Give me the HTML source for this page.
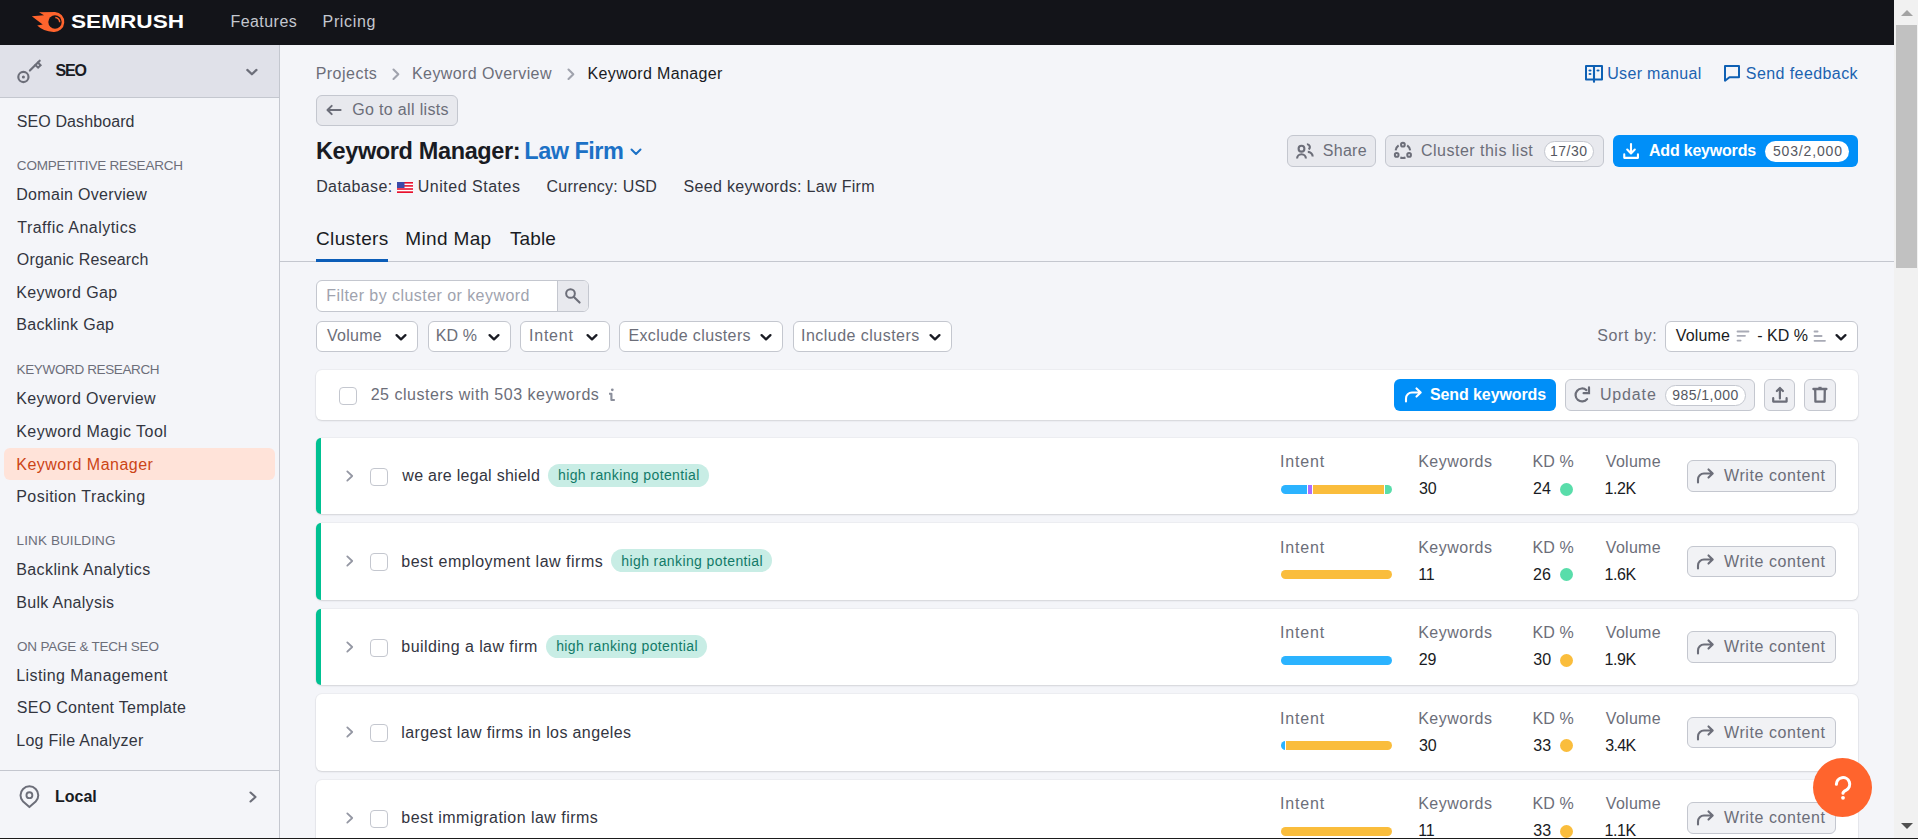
<!DOCTYPE html>
<html><head><meta charset="utf-8"><title>Keyword Manager</title><style>
*{box-sizing:border-box;margin:0;padding:0}
html,body{width:1918px;height:839px;overflow:hidden;background:#f4f5f9;font-family:"Liberation Sans",sans-serif}
.t{position:absolute;white-space:nowrap;line-height:20px}
.r{position:absolute}
.tag{position:absolute;height:22.5px;line-height:22.5px;padding:0 11px;background:#c9f2e6;color:#00785f;border-radius:12px;font-size:14.7px;letter-spacing:0.1px;white-space:nowrap}
.bar{position:absolute;left:1281px;width:111px;height:9px;border-radius:5px;overflow:hidden;display:flex}
.bar div{height:9px;flex:none}
</style></head><body>
<div class="r" style="left:0px;top:0px;width:1894px;height:45px;background:#131419"></div>
<svg class="r" style="left:28px;top:8px;" width="44" height="28" viewBox="0 0 44 28"><path d="M11,4.2 L27,3.9 A10,10 0 1 1 25.5,23.9 Q15,23.2 9.2,17.5 L14.7,16.6 L3.8,8.3 L16,7.3 Z" fill="#ff642d"/><circle cx="27" cy="14" r="6.7" fill="#131419"/><path d="M27.3,9.5 A4.6,4.6 0 0 1 31.7,14.3" stroke="#ff642d" stroke-width="1.5" fill="none"/></svg>
<div class="t " style="left:70.50px;top:12px;font-size:19px;color:#ffffff;font-weight:bold;transform:scaleX(1.19);transform-origin:0 0;">SEMRUSH</div>
<div class="t " style="left:230.45px;top:12px;font-size:16px;color:#c4c7cf;letter-spacing:0.450px;">Features</div>
<div class="t " style="left:322.55px;top:12px;font-size:16px;color:#c4c7cf;letter-spacing:0.658px;">Pricing</div>
<div class="r" style="left:0px;top:45px;width:279px;height:794px;background:#f4f5f9"></div>
<div class="r" style="left:279px;top:45px;width:1px;height:794px;background:#c4c7cf"></div>
<div class="r" style="left:0px;top:45px;width:279px;height:52px;background:#e0e1e9"></div>
<div class="r" style="left:0px;top:97px;width:279px;height:1px;background:#c4c7cf"></div>
<svg class="r" style="left:12px;top:55px;" width="36" height="33" viewBox="0 0 36 33"><g stroke="#6c6e79" fill="none" stroke-linecap="round"><circle cx="11.4" cy="22" r="5.1" stroke-width="2.15"/><path d="M17.9,15.5 L27.7,5.7" stroke-width="2.2"/><path d="M23.4,10 L26.1,12.7 L28.6,10.2 L25.9,7.5" stroke-width="2"/></g><circle cx="11.4" cy="22" r="1.55" fill="#6c6e79"/></svg>
<div class="t " style="left:55.50px;top:61px;font-size:16px;color:#191b23;font-weight:bold;letter-spacing:-1.175px;">SEO</div>
<svg class="r" style="left:244px;top:64px;" width="16" height="14" viewBox="0 0 16 14"><path d="M3.3,5.9 L7.9,10.3 L12.5,5.9" stroke="#6c6e79" stroke-width="2.2" fill="none" stroke-linecap="round" stroke-linejoin="round"/></svg>
<div class="t " style="left:16.75px;top:112px;font-size:16px;color:#33353f;letter-spacing:0.104px;">SEO Dashboard</div>
<div class="t " style="left:16.85px;top:156px;font-size:13.5px;color:#6c6e79;letter-spacing:-0.216px;">COMPETITIVE RESEARCH</div>
<div class="t " style="left:16.25px;top:185px;font-size:16px;color:#33353f;letter-spacing:0.307px;">Domain Overview</div>
<div class="t " style="left:17.25px;top:218px;font-size:16px;color:#33353f;letter-spacing:0.484px;">Traffic Analytics</div>
<div class="t " style="left:16.75px;top:250px;font-size:16px;color:#33353f;letter-spacing:0.183px;">Organic Research</div>
<div class="t " style="left:16.25px;top:283px;font-size:16px;color:#33353f;letter-spacing:0.400px;">Keyword Gap</div>
<div class="t " style="left:16.25px;top:315px;font-size:16px;color:#33353f;letter-spacing:0.318px;">Backlink Gap</div>
<div class="t " style="left:16.60px;top:360px;font-size:13.5px;color:#6c6e79;letter-spacing:-0.367px;">KEYWORD RESEARCH</div>
<div class="t " style="left:16.25px;top:389px;font-size:16px;color:#33353f;letter-spacing:0.397px;">Keyword Overview</div>
<div class="t " style="left:16.25px;top:422px;font-size:16px;color:#33353f;letter-spacing:0.453px;">Keyword Magic Tool</div>
<div class="r" style="left:4px;top:448px;width:271px;height:31.5px;background:#ffe3d9;border-radius:6px"></div>
<div class="t " style="left:16.25px;top:455px;font-size:16px;color:#cc4516;letter-spacing:0.486px;">Keyword Manager</div>
<div class="t " style="left:16.25px;top:487px;font-size:16px;color:#33353f;letter-spacing:0.438px;">Position Tracking</div>
<div class="t " style="left:16.60px;top:531px;font-size:13.5px;color:#6c6e79;letter-spacing:0.108px;">LINK BUILDING</div>
<div class="t " style="left:16.25px;top:560px;font-size:16px;color:#33353f;letter-spacing:0.397px;">Backlink Analytics</div>
<div class="t " style="left:16.25px;top:593px;font-size:16px;color:#33353f;letter-spacing:0.296px;">Bulk Analysis</div>
<div class="t " style="left:17.10px;top:637px;font-size:13.5px;color:#6c6e79;letter-spacing:-0.235px;">ON PAGE &amp; TECH SEO</div>
<div class="t " style="left:16.25px;top:666px;font-size:16px;color:#33353f;letter-spacing:0.415px;">Listing Management</div>
<div class="t " style="left:16.75px;top:698px;font-size:16px;color:#33353f;letter-spacing:0.303px;">SEO Content Template</div>
<div class="t " style="left:16.25px;top:731px;font-size:16px;color:#33353f;letter-spacing:0.272px;">Log File Analyzer</div>
<div class="r" style="left:0px;top:770px;width:279px;height:1px;background:#c4c7cf"></div>
<svg class="r" style="left:17px;top:783px;" width="26" height="28" viewBox="0 0 26 28"><path d="M12.4,24.1 L6.1,18.5 A8.9,8.9 0 1 1 18.7,18.5 Z" stroke="#6c6e79" stroke-width="2" fill="none" stroke-linejoin="round"/><circle cx="12.4" cy="12.2" r="2.95" stroke="#6c6e79" stroke-width="1.9" fill="none"/></svg>
<div class="t " style="left:55.00px;top:787px;font-size:16px;color:#191b23;font-weight:bold;letter-spacing:-0.012px;">Local</div>
<svg class="r" style="left:246px;top:790px;" width="14" height="14" viewBox="0 0 14 14"><path d="M4.5,2.5 L9.5,7 L4.5,11.5" stroke="#6c6e79" stroke-width="2.1" fill="none" stroke-linecap="round" stroke-linejoin="round"/></svg>
<div class="t " style="left:315.65px;top:64px;font-size:16px;color:#6c6e79;letter-spacing:0.486px;">Projects</div>
<svg class="r" style="left:389px;top:66.6px;" width="14" height="14" viewBox="0 0 14 14"><path d="M4.5,2.6 L9.3,7.3 L4.5,12" stroke="#a0a3ad" stroke-width="2.1" fill="none" stroke-linecap="round" stroke-linejoin="round"/></svg>
<div class="t " style="left:412.05px;top:64px;font-size:16px;color:#6c6e79;letter-spacing:0.403px;">Keyword Overview</div>
<svg class="r" style="left:564px;top:66.6px;" width="14" height="14" viewBox="0 0 14 14"><path d="M4.5,2.6 L9.3,7.3 L4.5,12" stroke="#a0a3ad" stroke-width="2.1" fill="none" stroke-linecap="round" stroke-linejoin="round"/></svg>
<div class="t " style="left:587.55px;top:64px;font-size:16px;color:#191b23;letter-spacing:0.357px;">Keyword Manager</div>
<svg class="r" style="left:1584px;top:64px;" width="22" height="22" viewBox="0 0 22 22"><g stroke="#0e60b4" stroke-width="2" fill="none" stroke-linejoin="round"><path d="M2,2 H18 V15.5 H2 Z"/><path d="M10,2 V18.6" stroke-linecap="butt" stroke-width="2.1"/></g><g fill="#0e60b4"><ellipse cx="6" cy="6.5" rx="1.6" ry="1.05"/><ellipse cx="6" cy="10" rx="1.5" ry="1.05"/><ellipse cx="14" cy="6.5" rx="1.6" ry="1.05"/></g></svg>
<div class="t " style="left:1607.15px;top:64px;font-size:16px;color:#1b62b0;letter-spacing:0.350px;">User manual</div>
<svg class="r" style="left:1723px;top:64px;" width="18" height="19" viewBox="0 0 18 19"><path d="M2,16.7 V2 H16 V13.2 H6.5 Z" stroke="#0e60b4" stroke-width="2" fill="none" stroke-linejoin="round"/></svg>
<div class="t " style="left:1745.85px;top:64px;font-size:16px;color:#1b62b0;letter-spacing:0.417px;">Send feedback</div>
<div class="r" style="left:316px;top:95px;width:142px;height:31px;background:#e8e9ee;border:1px solid #c4c7cf;border-radius:6px"></div>
<svg class="r" style="left:324px;top:102px;" width="20" height="18" viewBox="0 0 20 18"><path d="M16.6,8 H3.8 M7.7,3.9 L3.5,8 L7.7,12.1" stroke="#6c6e79" stroke-width="2" fill="none" stroke-linecap="round" stroke-linejoin="round"/></svg>
<div class="t " style="left:352.25px;top:100px;font-size:16px;color:#6c6e79;letter-spacing:0.339px;">Go to all lists</div>
<div class="t " style="left:315.90px;top:141px;font-size:23.5px;color:#191b23;font-weight:bold;letter-spacing:-0.367px;">Keyword Manager:</div>
<div class="t " style="left:524.30px;top:141px;font-size:23.5px;color:#1c71c6;font-weight:bold;letter-spacing:-0.507px;">Law Firm</div>
<svg class="r" style="left:628px;top:146px;" width="16" height="12" viewBox="0 0 16 12"><path d="M3.5,3.5 L8,8 L12.5,3.5" stroke="#1c71c6" stroke-width="2" fill="none" stroke-linecap="round" stroke-linejoin="round"/></svg>
<div class="t " style="left:316.15px;top:177px;font-size:16px;color:#33353f;letter-spacing:0.394px;">Database:</div>
<svg class="r" style="left:397px;top:182px;" width="16" height="11" viewBox="0 0 16 11"><rect width="16" height="11" fill="#e8112d"/><rect y="1.6" width="16" height="1.5" fill="#fff"/><rect y="4.7" width="16" height="1.5" fill="#fff"/><rect y="7.8" width="16" height="1.5" fill="#fff"/><rect width="7.5" height="6" fill="#3c4aa8"/></svg>
<div class="t " style="left:417.75px;top:177px;font-size:16px;color:#33353f;letter-spacing:0.513px;">United States</div>
<div class="t " style="left:546.55px;top:177px;font-size:16px;color:#33353f;letter-spacing:0.233px;">Currency: USD</div>
<div class="t " style="left:683.55px;top:177px;font-size:16px;color:#33353f;letter-spacing:0.316px;">Seed keywords: Law Firm</div>
<div class="r" style="left:1287px;top:135px;width:89px;height:32px;background:#e8e9ee;border:1px solid #c4c7cf;border-radius:6px"></div>
<svg class="r" style="left:1290px;top:138px;" width="30" height="26" viewBox="0 0 30 26"><g stroke="#6c6e79" stroke-width="2.1" fill="none" stroke-linecap="butt"><circle cx="11.5" cy="10.7" r="2.9"/><path d="M7.1,20.6 A4.4,4.4 0 0 1 15.9,20.6"/><path d="M16.9,6.2 A2.8,2.8 0 0 1 18.6,11.3"/><path d="M17.8,13.9 A4.8,4.8 0 0 1 22.7,18.6"/></g></svg>
<div class="t " style="left:1322.65px;top:141px;font-size:16px;color:#6c6e79;letter-spacing:0.338px;">Share</div>
<div class="r" style="left:1385px;top:135px;width:219px;height:32px;background:#e8e9ee;border:1px solid #c4c7cf;border-radius:6px"></div>
<svg class="r" style="left:1388px;top:138px;" width="30" height="26" viewBox="0 0 30 26"><g fill="none" stroke="#6c6e79" stroke-width="2"><circle cx="14.9" cy="6.7" r="1.85"/><circle cx="8.7" cy="16.9" r="1.85"/><circle cx="21.1" cy="16.9" r="1.85"/><path d="M7.6,12.4 A7.3,7.3 0 0 1 10.6,7.4"/><path d="M19.2,7.4 A7.3,7.3 0 0 1 22.2,12.4"/><path d="M12.3,19.5 A7,7 0 0 0 17.5,19.5"/></g></svg>
<div class="t " style="left:1421.05px;top:141px;font-size:16px;color:#6c6e79;letter-spacing:0.484px;">Cluster this list</div>
<div class="r" style="left:1543.5px;top:140.5px;width:50.5px;height:21px;background:#fff;border:1px solid #c4c7cf;border-radius:11px"></div>
<div class="t " style="left:1550.00px;top:141px;font-size:14px;color:#555761;letter-spacing:0.500px;">17/30</div>
<div class="r" style="left:1613px;top:135px;width:245px;height:32px;background:#008ff8;border-radius:6px"></div>
<svg class="r" style="left:1620px;top:140px;" width="22" height="22" viewBox="0 0 22 22"><g stroke="#fff" stroke-width="2.1" fill="none" stroke-linecap="round" stroke-linejoin="round"><path d="M11,4 V13.2 M7.2,9.6 L11,13.4 L14.8,9.6"/><path d="M4.25,14.4 V17.85 H17.95 V14.4"/></g></svg>
<div class="t " style="left:1649.00px;top:141px;font-size:16px;color:#fff;font-weight:bold;letter-spacing:-0.205px;">Add keywords</div>
<div class="r" style="left:1765px;top:140.5px;width:83.5px;height:21.5px;background:#fff;border-radius:11px"></div>
<div class="t " style="left:1772.90px;top:141px;font-size:14px;color:#555761;letter-spacing:0.844px;">503/2,000</div>
<div class="t " style="left:316.00px;top:229px;font-size:19px;color:#191b23;letter-spacing:0.371px;">Clusters</div>
<div class="t " style="left:405.30px;top:229px;font-size:19px;color:#191b23;letter-spacing:0.350px;">Mind Map</div>
<div class="t " style="left:509.95px;top:229px;font-size:19px;color:#191b23;letter-spacing:0.125px;">Table</div>
<div class="r" style="left:280px;top:261px;width:1614px;height:1px;background:#c4c7cf"></div>
<div class="r" style="left:316px;top:259px;width:72px;height:3px;background:#0b5db8"></div>
<div class="r" style="left:316px;top:280px;width:273px;height:31.5px;background:#fff;border:1px solid #c4c7cf;border-radius:6px"></div>
<div class="r" style="left:557px;top:281px;width:31px;height:29.5px;background:#e8e9ee;border-left:1px solid #c4c7cf;border-radius:0 5px 5px 0"></div>
<svg class="r" style="left:563px;top:286px;" width="20" height="20" viewBox="0 0 20 20"><circle cx="7.5" cy="7.5" r="4.35" stroke="#6c6e79" stroke-width="2" fill="none"/><path d="M10.9,10.9 L16.6,16.6" stroke="#6c6e79" stroke-width="2.1" stroke-linecap="round"/></svg>
<div class="t " style="left:326.25px;top:286px;font-size:16px;color:#a0a3ae;letter-spacing:0.444px;">Filter by cluster or keyword</div>
<div class="r" style="left:316px;top:321px;width:102px;height:30.5px;background:#fff;border:1px solid #c4c7cf;border-radius:6px"></div>
<div class="t " style="left:327.00px;top:326px;font-size:16px;color:#6c6e79;letter-spacing:0.250px;">Volume</div>
<svg class="r" style="left:395px;top:331.6px;" width="12" height="10" viewBox="0 0 12 10"><path d="M1.6,3.1 L6,7.4 L10.4,3.1" stroke="#191b23" stroke-width="2.3" fill="none" stroke-linecap="round" stroke-linejoin="round"/></svg>
<div class="r" style="left:427.5px;top:321px;width:83.0px;height:30.5px;background:#fff;border:1px solid #c4c7cf;border-radius:6px"></div>
<div class="t " style="left:435.75px;top:326px;font-size:16px;color:#6c6e79;letter-spacing:0.083px;">KD %</div>
<svg class="r" style="left:488px;top:331.6px;" width="12" height="10" viewBox="0 0 12 10"><path d="M1.6,3.1 L6,7.4 L10.4,3.1" stroke="#191b23" stroke-width="2.3" fill="none" stroke-linecap="round" stroke-linejoin="round"/></svg>
<div class="r" style="left:520px;top:321px;width:89.5px;height:30.5px;background:#fff;border:1px solid #c4c7cf;border-radius:6px"></div>
<div class="t " style="left:529.10px;top:326px;font-size:16px;color:#6c6e79;letter-spacing:0.740px;">Intent</div>
<svg class="r" style="left:585.5px;top:331.6px;" width="12" height="10" viewBox="0 0 12 10"><path d="M1.6,3.1 L6,7.4 L10.4,3.1" stroke="#191b23" stroke-width="2.3" fill="none" stroke-linecap="round" stroke-linejoin="round"/></svg>
<div class="r" style="left:619px;top:321px;width:163.5px;height:30.5px;background:#fff;border:1px solid #c4c7cf;border-radius:6px"></div>
<div class="t " style="left:628.45px;top:326px;font-size:16px;color:#6c6e79;letter-spacing:0.377px;">Exclude clusters</div>
<svg class="r" style="left:760px;top:331.6px;" width="12" height="10" viewBox="0 0 12 10"><path d="M1.6,3.1 L6,7.4 L10.4,3.1" stroke="#191b23" stroke-width="2.3" fill="none" stroke-linecap="round" stroke-linejoin="round"/></svg>
<div class="r" style="left:792.5px;top:321px;width:159.0px;height:30.5px;background:#fff;border:1px solid #c4c7cf;border-radius:6px"></div>
<div class="t " style="left:801.00px;top:326px;font-size:16px;color:#6c6e79;letter-spacing:0.470px;">Include clusters</div>
<svg class="r" style="left:929px;top:331.6px;" width="12" height="10" viewBox="0 0 12 10"><path d="M1.6,3.1 L6,7.4 L10.4,3.1" stroke="#191b23" stroke-width="2.3" fill="none" stroke-linecap="round" stroke-linejoin="round"/></svg>
<div class="t " style="left:1597.25px;top:326px;font-size:16px;color:#6c6e79;letter-spacing:0.629px;">Sort by:</div>
<div class="r" style="left:1665px;top:321px;width:193px;height:30.5px;background:#fff;border:1px solid #c4c7cf;border-radius:6px"></div>
<div class="t " style="left:1675.70px;top:326px;font-size:16px;color:#191b23;letter-spacing:0.190px;">Volume</div>
<svg class="r" style="left:1736px;top:330px;" width="14" height="12" viewBox="0 0 14 12"><g stroke="#a9abb6" stroke-width="1.8" stroke-linecap="round"><path d="M1.5,1.5 H12.5 M1.5,5.8 H9 M1.5,10.6 H4.6"/></g></svg>
<div class="t " style="left:1757.25px;top:326px;font-size:16px;color:#191b23;">- KD %</div>
<svg class="r" style="left:1813px;top:330px;" width="14" height="12" viewBox="0 0 14 12"><g stroke="#a9abb6" stroke-width="1.8" stroke-linecap="round"><path d="M1.5,1.5 H4.6 M1.5,6 H8.6 M1.5,10.8 H12"/></g></svg>
<svg class="r" style="left:1835px;top:331.6px;" width="12" height="10" viewBox="0 0 12 10"><path d="M1.6,3.1 L6,7.4 L10.4,3.1" stroke="#191b23" stroke-width="2.3" fill="none" stroke-linecap="round" stroke-linejoin="round"/></svg>
<div class="r" style="left:316px;top:370px;width:1542px;height:50px;background:#fff;border-radius:6px;box-shadow:0 1px 2px rgba(25,27,35,0.12),0 0 0 1px rgba(25,27,35,0.03)"></div>
<div class="r" style="left:339px;top:387px;width:18px;height:18px;background:#fff;border:1px solid #c4c7cf;border-radius:4px"></div>
<div class="t " style="left:370.65px;top:385px;font-size:16px;color:#6c6e79;letter-spacing:0.527px;">25 clusters with 503 keywords</div>
<svg class="r" style="left:606px;top:386px;" width="14" height="18" viewBox="0 0 14 18"><circle cx="6.3" cy="3.8" r="1.4" fill="#8a8e9b"/><path d="M3,7.8 H5.4 V14 H8.8" stroke="#8a8e9b" stroke-width="2.1" fill="none" stroke-linejoin="round"/></svg>
<div class="r" style="left:1394px;top:379px;width:162px;height:31.6px;background:#008ff8;border-radius:6px"></div>
<svg class="r" style="left:1401.5px;top:384.2px;" width="22" height="22" viewBox="0 0 22 22"><path d="M4,17.4 V14.5 A6,6 0 0 1 10,8.5 H18.6 M14.5,4.4 L18.7,8.5 L14.5,12.6" stroke="#fff" stroke-width="2.1" fill="none" stroke-linecap="round" stroke-linejoin="round"/></svg>
<div class="t " style="left:1430.00px;top:385px;font-size:16px;color:#fff;font-weight:bold;letter-spacing:-0.104px;">Send keywords</div>
<div class="r" style="left:1565px;top:379px;width:189.5px;height:31.6px;background:#eeeff3;border:1px solid #c4c7cf;border-radius:6px"></div>
<svg class="r" style="left:1572px;top:384px;" width="22" height="22" viewBox="0 0 22 22"><path d="M14.4,6.1 A6.5,6.5 0 1 0 15.1,15.1" stroke="#6c6e79" stroke-width="2.2" fill="none" stroke-linecap="round"/><path d="M17,3.4 V9.2 H11.6" stroke="#6c6e79" stroke-width="2.2" fill="none" stroke-linecap="round" stroke-linejoin="miter"/></svg>
<div class="t " style="left:1599.95px;top:385px;font-size:16px;color:#6c6e79;letter-spacing:0.850px;">Update</div>
<div class="r" style="left:1665px;top:384.5px;width:80.5px;height:21px;background:#fff;border:1px solid #c4c7cf;border-radius:11px"></div>
<div class="t " style="left:1672.20px;top:385px;font-size:14px;color:#555761;letter-spacing:0.469px;">985/1,000</div>
<div class="r" style="left:1764px;top:379px;width:31px;height:31.6px;background:#eeeff3;border:1px solid #c4c7cf;border-radius:6px"></div>
<svg class="r" style="left:1768px;top:384px;" width="22" height="22" viewBox="0 0 22 22"><g stroke="#6c6e79" stroke-width="2.2" fill="none" stroke-linecap="round" stroke-linejoin="round"><path d="M11.9,14.4 V4 M8.9,7 L11.9,3.9 L14.9,7"/><path d="M5.2,14.2 V17.6 H18.6 V14.2"/></g></svg>
<div class="r" style="left:1804px;top:379px;width:32px;height:31.6px;background:#eeeff3;border:1px solid #c4c7cf;border-radius:6px"></div>
<svg class="r" style="left:1809px;top:384px;" width="22" height="22" viewBox="0 0 22 22"><g stroke="#6c6e79" stroke-width="2.3" fill="none" stroke-linejoin="round"><path d="M4.4,5 H17.4" stroke-linecap="round"/><path d="M9.4,3.8 H12.6"  stroke-width="2"/><path d="M6.2,5.2 L6.4,17.7 H15.6 L15.8,5.2"/></g></svg>
<div class="r" style="left:316px;top:438px;width:1542px;height:76px;background:#fff;border-radius:6px;box-shadow:0 1px 2px rgba(25,27,35,0.12),0 0 0 1px rgba(25,27,35,0.03)"></div>
<div class="r" style="left:316px;top:438px;width:5px;height:76px;background:#00c192;border-radius:6px 0 0 6px"></div>
<svg class="r" style="left:343.5px;top:469px;" width="12" height="14" viewBox="0 0 12 14"><path d="M3.3,2.4 L8.2,7 L3.3,11.6" stroke="#9497a3" stroke-width="1.8" fill="none" stroke-linecap="round" stroke-linejoin="round"/></svg>
<div class="r" style="left:370px;top:468px;width:18px;height:18px;background:#fff;border:1px solid #c4c7cf;border-radius:4px"></div>
<div class="t " style="left:402.30px;top:466px;font-size:16px;color:#33353f;letter-spacing:0.278px;">we are legal shield</div>
<div class="r" style="left:548px;top:464.1px;width:160.5px;height:22.7px;background:#c8ede5;border-radius:12px"></div>
<div class="t " style="left:558.00px;top:465px;font-size:14px;color:#127a68;letter-spacing:0.393px;">high ranking potential</div>
<div class="t " style="left:1280.00px;top:452px;font-size:16px;color:#6c6e79;letter-spacing:0.840px;">Intent</div>
<div class="bar" style="top:485px"><div style="width:26.3px;background:#2bb3ff"></div><div style="width:0.9px;background:#fff"></div><div style="width:4.3px;background:#ab6cfe"></div><div style="width:0.6px;background:#fff"></div><div style="width:71.4px;background:#fabd3c"></div><div style="width:0.7px;background:#fff"></div><div style="width:7.1px;background:#59ddaa"></div></div>
<div class="t " style="left:1418.15px;top:452px;font-size:16px;color:#6c6e79;letter-spacing:0.500px;">Keywords</div>
<div class="t " style="left:1418.90px;top:479px;font-size:16px;color:#191b23;">30</div>
<div class="t " style="left:1532.55px;top:452px;font-size:16px;color:#6c6e79;letter-spacing:0.083px;">KD %</div>
<div class="t " style="left:1533.05px;top:479px;font-size:16px;color:#191b23;">24</div>
<div class="r" style="left:1560px;top:483px;width:13px;height:13px;background:#59ddaa;border-radius:50%"></div>
<div class="t " style="left:1605.80px;top:452px;font-size:16px;color:#6c6e79;letter-spacing:0.290px;">Volume</div>
<div class="t " style="left:1604.55px;top:479px;font-size:16px;color:#191b23;letter-spacing:-0.433px;">1.2K</div>
<div class="r" style="left:1687px;top:460px;width:149px;height:32px;background:#f1f2f5;border:1px solid #c4c7cf;border-radius:6px"></div>
<svg class="r" style="left:1694px;top:465px;" width="22" height="22" viewBox="0 0 22 22"><path d="M4,17.4 V14.5 A6,6 0 0 1 10,8.5 H18.6 M14.5,4.4 L18.7,8.5 L14.5,12.6" stroke="#6c6e79" stroke-width="2.1" fill="none" stroke-linecap="round" stroke-linejoin="round"/></svg>
<div class="t " style="left:1724.00px;top:466px;font-size:16px;color:#6c6e79;letter-spacing:0.583px;">Write content</div>
<div class="r" style="left:316px;top:523px;width:1542px;height:77px;background:#fff;border-radius:6px;box-shadow:0 1px 2px rgba(25,27,35,0.12),0 0 0 1px rgba(25,27,35,0.03)"></div>
<div class="r" style="left:316px;top:523px;width:5px;height:77px;background:#00c192;border-radius:6px 0 0 6px"></div>
<svg class="r" style="left:343.5px;top:554px;" width="12" height="14" viewBox="0 0 12 14"><path d="M3.3,2.4 L8.2,7 L3.3,11.6" stroke="#9497a3" stroke-width="1.8" fill="none" stroke-linecap="round" stroke-linejoin="round"/></svg>
<div class="r" style="left:370px;top:553px;width:18px;height:18px;background:#fff;border:1px solid #c4c7cf;border-radius:4px"></div>
<div class="t " style="left:401.30px;top:552px;font-size:16px;color:#33353f;letter-spacing:0.502px;">best employment law firms</div>
<div class="r" style="left:611.3px;top:549.1px;width:160.5px;height:22.7px;background:#c8ede5;border-radius:12px"></div>
<div class="t " style="left:621.30px;top:551px;font-size:14px;color:#127a68;letter-spacing:0.393px;">high ranking potential</div>
<div class="t " style="left:1280.00px;top:538px;font-size:16px;color:#6c6e79;letter-spacing:0.840px;">Intent</div>
<div class="bar" style="top:570px"><div style="width:111px;background:#fabd3c"></div></div>
<div class="t " style="left:1418.15px;top:538px;font-size:16px;color:#6c6e79;letter-spacing:0.500px;">Keywords</div>
<div class="t " style="left:1418.15px;top:565px;font-size:16px;color:#191b23;">11</div>
<div class="t " style="left:1532.55px;top:538px;font-size:16px;color:#6c6e79;letter-spacing:0.083px;">KD %</div>
<div class="t " style="left:1533.05px;top:565px;font-size:16px;color:#191b23;">26</div>
<div class="r" style="left:1560px;top:568px;width:13px;height:13px;background:#59ddaa;border-radius:50%"></div>
<div class="t " style="left:1605.80px;top:538px;font-size:16px;color:#6c6e79;letter-spacing:0.290px;">Volume</div>
<div class="t " style="left:1604.55px;top:565px;font-size:16px;color:#191b23;letter-spacing:-0.433px;">1.6K</div>
<div class="r" style="left:1687px;top:546px;width:149px;height:31px;background:#f1f2f5;border:1px solid #c4c7cf;border-radius:6px"></div>
<svg class="r" style="left:1694px;top:551px;" width="22" height="22" viewBox="0 0 22 22"><path d="M4,17.4 V14.5 A6,6 0 0 1 10,8.5 H18.6 M14.5,4.4 L18.7,8.5 L14.5,12.6" stroke="#6c6e79" stroke-width="2.1" fill="none" stroke-linecap="round" stroke-linejoin="round"/></svg>
<div class="t " style="left:1724.00px;top:552px;font-size:16px;color:#6c6e79;letter-spacing:0.583px;">Write content</div>
<div class="r" style="left:316px;top:609px;width:1542px;height:76px;background:#fff;border-radius:6px;box-shadow:0 1px 2px rgba(25,27,35,0.12),0 0 0 1px rgba(25,27,35,0.03)"></div>
<div class="r" style="left:316px;top:609px;width:5px;height:76px;background:#00c192;border-radius:6px 0 0 6px"></div>
<svg class="r" style="left:343.5px;top:640px;" width="12" height="14" viewBox="0 0 12 14"><path d="M3.3,2.4 L8.2,7 L3.3,11.6" stroke="#9497a3" stroke-width="1.8" fill="none" stroke-linecap="round" stroke-linejoin="round"/></svg>
<div class="r" style="left:370px;top:639px;width:18px;height:18px;background:#fff;border:1px solid #c4c7cf;border-radius:4px"></div>
<div class="t " style="left:401.30px;top:637px;font-size:16px;color:#33353f;letter-spacing:0.444px;">building a law firm</div>
<div class="r" style="left:546.2px;top:635.1px;width:160.5px;height:22.7px;background:#c8ede5;border-radius:12px"></div>
<div class="t " style="left:556.20px;top:636px;font-size:14px;color:#127a68;letter-spacing:0.393px;">high ranking potential</div>
<div class="t " style="left:1280.00px;top:623px;font-size:16px;color:#6c6e79;letter-spacing:0.840px;">Intent</div>
<div class="bar" style="top:656px"><div style="width:111px;background:#2bb3ff"></div></div>
<div class="t " style="left:1418.15px;top:623px;font-size:16px;color:#6c6e79;letter-spacing:0.500px;">Keywords</div>
<div class="t " style="left:1418.65px;top:650px;font-size:16px;color:#191b23;">29</div>
<div class="t " style="left:1532.55px;top:623px;font-size:16px;color:#6c6e79;letter-spacing:0.083px;">KD %</div>
<div class="t " style="left:1533.30px;top:650px;font-size:16px;color:#191b23;">30</div>
<div class="r" style="left:1560px;top:654px;width:13px;height:13px;background:#fabd3c;border-radius:50%"></div>
<div class="t " style="left:1605.80px;top:623px;font-size:16px;color:#6c6e79;letter-spacing:0.290px;">Volume</div>
<div class="t " style="left:1604.55px;top:650px;font-size:16px;color:#191b23;letter-spacing:-0.433px;">1.9K</div>
<div class="r" style="left:1687px;top:631px;width:149px;height:32px;background:#f1f2f5;border:1px solid #c4c7cf;border-radius:6px"></div>
<svg class="r" style="left:1694px;top:636px;" width="22" height="22" viewBox="0 0 22 22"><path d="M4,17.4 V14.5 A6,6 0 0 1 10,8.5 H18.6 M14.5,4.4 L18.7,8.5 L14.5,12.6" stroke="#6c6e79" stroke-width="2.1" fill="none" stroke-linecap="round" stroke-linejoin="round"/></svg>
<div class="t " style="left:1724.00px;top:637px;font-size:16px;color:#6c6e79;letter-spacing:0.583px;">Write content</div>
<div class="r" style="left:316px;top:694px;width:1542px;height:77px;background:#fff;border-radius:6px;box-shadow:0 1px 2px rgba(25,27,35,0.12),0 0 0 1px rgba(25,27,35,0.03)"></div>
<svg class="r" style="left:343.5px;top:725px;" width="12" height="14" viewBox="0 0 12 14"><path d="M3.3,2.4 L8.2,7 L3.3,11.6" stroke="#9497a3" stroke-width="1.8" fill="none" stroke-linecap="round" stroke-linejoin="round"/></svg>
<div class="r" style="left:370px;top:724px;width:18px;height:18px;background:#fff;border:1px solid #c4c7cf;border-radius:4px"></div>
<div class="t " style="left:401.30px;top:723px;font-size:16px;color:#33353f;letter-spacing:0.379px;">largest law firms in los angeles</div>
<div class="t " style="left:1280.00px;top:709px;font-size:16px;color:#6c6e79;letter-spacing:0.840px;">Intent</div>
<div class="bar" style="top:741px"><div style="width:3.8px;background:#2bb3ff"></div><div style="width:1px;background:#fff"></div><div style="width:106.2px;background:#fabd3c"></div></div>
<div class="t " style="left:1418.15px;top:709px;font-size:16px;color:#6c6e79;letter-spacing:0.500px;">Keywords</div>
<div class="t " style="left:1418.90px;top:736px;font-size:16px;color:#191b23;">30</div>
<div class="t " style="left:1532.55px;top:709px;font-size:16px;color:#6c6e79;letter-spacing:0.083px;">KD %</div>
<div class="t " style="left:1533.30px;top:736px;font-size:16px;color:#191b23;">33</div>
<div class="r" style="left:1560px;top:739px;width:13px;height:13px;background:#fabd3c;border-radius:50%"></div>
<div class="t " style="left:1605.80px;top:709px;font-size:16px;color:#6c6e79;letter-spacing:0.290px;">Volume</div>
<div class="t " style="left:1605.30px;top:736px;font-size:16px;color:#191b23;letter-spacing:-0.683px;">3.4K</div>
<div class="r" style="left:1687px;top:717px;width:149px;height:31px;background:#f1f2f5;border:1px solid #c4c7cf;border-radius:6px"></div>
<svg class="r" style="left:1694px;top:722px;" width="22" height="22" viewBox="0 0 22 22"><path d="M4,17.4 V14.5 A6,6 0 0 1 10,8.5 H18.6 M14.5,4.4 L18.7,8.5 L14.5,12.6" stroke="#6c6e79" stroke-width="2.1" fill="none" stroke-linecap="round" stroke-linejoin="round"/></svg>
<div class="t " style="left:1724.00px;top:723px;font-size:16px;color:#6c6e79;letter-spacing:0.583px;">Write content</div>
<div class="r" style="left:316px;top:780px;width:1542px;height:77px;background:#fff;border-radius:6px;box-shadow:0 1px 2px rgba(25,27,35,0.12),0 0 0 1px rgba(25,27,35,0.03)"></div>
<svg class="r" style="left:343.5px;top:811px;" width="12" height="14" viewBox="0 0 12 14"><path d="M3.3,2.4 L8.2,7 L3.3,11.6" stroke="#9497a3" stroke-width="1.8" fill="none" stroke-linecap="round" stroke-linejoin="round"/></svg>
<div class="r" style="left:370px;top:810px;width:18px;height:18px;background:#fff;border:1px solid #c4c7cf;border-radius:4px"></div>
<div class="t " style="left:401.30px;top:808px;font-size:16px;color:#33353f;letter-spacing:0.460px;">best immigration law firms</div>
<div class="t " style="left:1280.00px;top:794px;font-size:16px;color:#6c6e79;letter-spacing:0.840px;">Intent</div>
<div class="bar" style="top:827px"><div style="width:111px;background:#fabd3c"></div></div>
<div class="t " style="left:1418.15px;top:794px;font-size:16px;color:#6c6e79;letter-spacing:0.500px;">Keywords</div>
<div class="t " style="left:1418.15px;top:821px;font-size:16px;color:#191b23;">11</div>
<div class="t " style="left:1532.55px;top:794px;font-size:16px;color:#6c6e79;letter-spacing:0.083px;">KD %</div>
<div class="t " style="left:1533.30px;top:821px;font-size:16px;color:#191b23;">33</div>
<div class="r" style="left:1560px;top:825px;width:13px;height:13px;background:#fabd3c;border-radius:50%"></div>
<div class="t " style="left:1605.80px;top:794px;font-size:16px;color:#6c6e79;letter-spacing:0.290px;">Volume</div>
<div class="t " style="left:1604.55px;top:821px;font-size:16px;color:#191b23;letter-spacing:-0.433px;">1.1K</div>
<div class="r" style="left:1687px;top:802px;width:149px;height:32px;background:#f1f2f5;border:1px solid #c4c7cf;border-radius:6px"></div>
<svg class="r" style="left:1694px;top:807px;" width="22" height="22" viewBox="0 0 22 22"><path d="M4,17.4 V14.5 A6,6 0 0 1 10,8.5 H18.6 M14.5,4.4 L18.7,8.5 L14.5,12.6" stroke="#6c6e79" stroke-width="2.1" fill="none" stroke-linecap="round" stroke-linejoin="round"/></svg>
<div class="t " style="left:1724.00px;top:808px;font-size:16px;color:#6c6e79;letter-spacing:0.583px;">Write content</div>
<div class="r" style="left:1813px;top:758px;width:59px;height:59px;background:#ff642d;border-radius:50%"></div>
<svg class="r" style="left:1830px;top:772px;" width="26" height="32" viewBox="0 0 26 32"><path d="M6.4,12.3 A6.65,6.65 0 1 1 16.2,18.1 C13.8,19.3 13,20 13,21.2" stroke="#fff" stroke-width="3.1" fill="none" stroke-linecap="round"/><circle cx="13" cy="25.8" r="1.9" fill="#fff"/></svg>
<div class="r" style="left:0px;top:838px;width:1918px;height:1px;background:#1b1b1b"></div>
<div class="r" style="left:1894px;top:0px;width:24px;height:838px;background:#f1f1f1"></div>
<div class="r" style="left:1896px;top:25px;width:21px;height:243px;background:#c1c1c1"></div>
<svg class="r" style="left:1899px;top:8px;" width="16" height="10" viewBox="0 0 16 10"><path d="M2,8 L8,2 L14,8 Z" fill="#a3a3a3"/></svg>
<svg class="r" style="left:1899px;top:821px;" width="16" height="10" viewBox="0 0 16 10"><path d="M2,2 L8,8 L14,2 Z" fill="#505050"/></svg>
</body></html>
